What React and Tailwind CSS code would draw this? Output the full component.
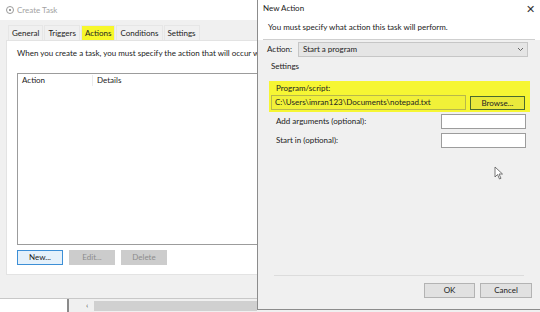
import React from "react";

const font = { fontFamily: 'Lato, "Noto Sans", sans-serif' };

const Tab = ({ label, active }) => (
  <div
    className={
      "px-[3px] h-[15px] leading-[15px] border border-[#e6e6e6] border-b-0 text-[#222] " +
      (active ? "bg-[#f7f72a]" : "bg-[#f0f0f0]")
    }
  >
    {label}
  </div>
);

const CreateTask = () => (
  <div className="w-[257px] shrink-0 h-full bg-[#f0f0f0] flex flex-col overflow-hidden">
    <div className="h-[20px] bg-white flex items-center gap-[3px] pl-[6px] text-[#a3a3a3]">
      <span className="w-[8px] h-[8px] rounded-full border-[1.5px] border-[#9a9a9a] flex items-center justify-center">
        <span className="w-[2px] h-[2px] bg-[#9a9a9a]" />
      </span>
      <span>Create Task</span>
    </div>
    <div className="h-[20px] flex items-end pl-[8px] gap-[1px]">
      <Tab label="General" />
      <Tab label="Triggers" />
      <Tab label="Actions" active />
      <Tab label="Conditions" />
      <Tab label="Settings" />
    </div>
    <div className="ml-[6px] w-[251px] h-[235px] bg-white border border-[#e3e3e3] border-r-0 flex flex-col pl-[10px] overflow-hidden">
      <p className="pt-[7px] h-[32px] whitespace-nowrap text-[#222]">
        When you create a task, you must specify the action that will occur when your task starts.
      </p>
      <div className="w-[250px] shrink-0 h-[172px] border border-[#9c9c9c] border-r-0 bg-white">
        <div className="flex h-[13px] items-center text-[#222]">
          <span className="w-[75px] pl-[4px] border-r border-[#ececec]">Action</span>
          <span className="pl-[4px]">Details</span>
        </div>
      </div>
      <div className="flex gap-[6px] mt-[5px]">
        <button className="w-[46px] h-[15px] border border-[#3d8fd6] bg-[#e5f1fb] text-[#222]">New...</button>
        <button className="w-[46px] h-[15px] bg-[#cccccc] text-[#8c8c8c]">Edit...</button>
        <button className="w-[46px] h-[15px] bg-[#cccccc] text-[#8c8c8c]">Delete</button>
      </div>
    </div>
    <div className="h-[23px]" />
    <div className="flex-1 flex border-t border-[#c8c8c8]">
      <div className="w-[67px] bg-white" />
      <div className="w-[2px] bg-[#8a8a8a]" />
      <div className="w-[17px] bg-[#f0f0f0]" />
      <div className="w-[8px] text-[#555] leading-[12px]">&lsaquo;</div>
      <div className="flex-1 bg-[#d0d0d0] mt-[2px] mb-[1px]" />
    </div>
  </div>
);

const Field = ({ label, top }) => (
  <div className={"flex items-center justify-between pl-[18px] pr-[14px] h-[15px] " + top}>
    <span className="text-[#222]">{label}</span>
    <div className="w-[85px] h-[15px] bg-white border border-[#9c9c9c]" />
  </div>
);

const NewAction = () => (
  <div className="relative w-[283px] shrink-0 h-[310px] bg-[#f0f0f0] border-l border-b border-[#8c8c8c] flex flex-col">
    <div className="h-[16px] bg-white flex items-center justify-between pl-[5px] pr-[5px] text-[#222]">
      <span>New Action</span>
      <span className="text-[11px] text-[#333] leading-none">&#x2715;</span>
    </div>
    <div className="h-[24px] bg-white px-[5px]">
      <div className="h-full border-b border-[#cfcfcf] pl-[5px] pt-[6px] text-[#222]">
        You must specify what action this task will perform.
      </div>
    </div>
    <div className="flex items-center mt-[2px] pl-[9px] pr-[12px] h-[15px]">
      <span className="w-[31px] text-[#222]">Action:</span>
      <div className="flex-1 h-[15px] bg-[#e5e5e5] border border-[#c6c6c6] flex items-center justify-between pl-[4px] pr-[3px] text-[#222]">
        <span>Start a program</span>
        <svg width="7" height="5" viewBox="0 0 7 5">
          <path d="M1 1 L3.5 3.5 L6 1" stroke="#666" fill="none" strokeWidth="1" />
        </svg>
      </div>
    </div>
    <div className="pl-[13px] mt-[3px] h-[12px] leading-[12px] text-[#222]">Settings</div>
    <div className="mx-[11px] mt-[9px] w-[261px] h-[31px] bg-[#f6f633] px-[2px] pt-[1px] flex flex-col">
      <span className="pl-[5px] h-[13px] leading-[13px] text-[#222]">Program/script:</span>
      <div className="flex items-center gap-[4px]">
        <div className="w-[195px] h-[15px] bg-[#f1f138] border border-[#b8b84a] pl-[3px] leading-[13px] text-[#222] whitespace-nowrap">
          C:\Users\imran123\Documents\notepad.txt
        </div>
        <button className="w-[55px] h-[14px] bg-[#e9e93c] border border-[#4a6a2e] text-[#222] leading-[12px]">
          Browse...
        </button>
      </div>
    </div>
    <Field label="Add arguments (optional):" top="mt-[2px]" />
    <Field label="Start in (optional):" top="mt-[4px]" />
    <div className="flex-1" />
    <div className="mx-[16px] border-b border-[#dcdcdc]" />
    <div className="flex justify-end gap-[5px] pr-[8px] mt-[7px] mb-[11px]">
      <button className="w-[51px] h-[15px] bg-[#e1e1e1] border border-[#b3b3b3] text-[#222]">OK</button>
      <button className="w-[52px] h-[15px] bg-[#e1e1e1] border border-[#b3b3b3] text-[#222]">Cancel</button>
    </div>
    <svg className="absolute left-[236px] top-[166px]" width="10" height="14" viewBox="0 0 10 14">
      <path d="M1 1 L1 11 L3.5 8.5 L5.5 13 L7 12.3 L5 8 L8.5 8 Z" fill="#fff" stroke="#555" strokeWidth="0.8" />
    </svg>
  </div>
);

export default function App() {
  return (
    <div className="w-[540px] h-[312px] overflow-hidden flex bg-[#f0f0f0] text-[8px] leading-[11px]" style={font}>
      <CreateTask />
      <div className="flex flex-col">
        <NewAction />
        <div className="flex-1 bg-[#f0f0f0]" />
      </div>
    </div>
  );
}
